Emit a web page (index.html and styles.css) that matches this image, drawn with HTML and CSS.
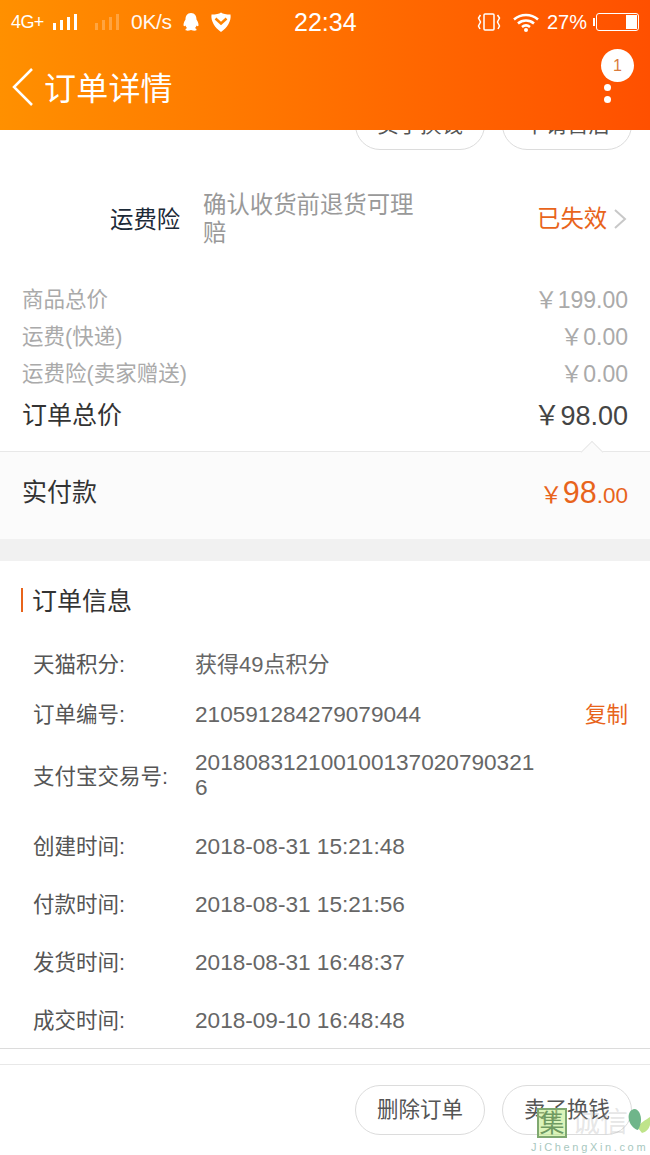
FILE: index.html
```html
<!DOCTYPE html>
<html lang="zh">
<head>
<meta charset="utf-8">
<title>订单详情</title>
<link rel="stylesheet" href="styles.css">
</head>
<body>
<div class="page">
  <header class="top">
    <div class="status">
      <div class="status-left">
        <span class="net">4G+</span>
        <svg class="bars" width="26" height="20" viewBox="0 0 26 20"><rect x="1" y="11" width="3" height="7"/><rect x="8" y="8" width="3" height="10"/><rect x="15" y="5" width="3" height="13"/><rect x="22" y="2" width="3" height="16"/></svg>
        <svg class="bars dim" width="26" height="20" viewBox="0 0 26 20"><rect x="1" y="11" width="3" height="7"/><rect x="8" y="8" width="3" height="10"/><rect x="15" y="5" width="3" height="13"/><rect x="22" y="2" width="3" height="16"/></svg>
        <span class="speed">0K/s</span>
        <svg class="qq" width="18" height="20" viewBox="0 0 18 20"><path d="M9 1C5 1 3.500 4 3.500 7.500C2.500 9 1.500 11 1.500 13C1.500 14.500 2.500 14.500 3.500 13.500C4 15 4.500 15.500 5 16C4 16.500 3.500 17 3.500 17.800C3.500 19 6.500 19 9 18C11.500 19 14.500 19 14.500 17.800C14.500 17 14 16.500 13 16C13.500 15.500 14 15 14.500 13.500C15.500 14.500 16.500 14.500 16.500 13C16.500 11 15.500 9 14.500 7.500C14.500 4 13 1 9 1Z" fill="#fff"/></svg>
        <svg class="shield" width="22" height="22" viewBox="0 0 22 22"><path d="M11 1.500C13 3 16 3.500 20.500 3.500C21.500 10 17 17 11 21C5 17 .5 10 1.500 3.500C6 3.500 9 3 11 1.500Z" fill="#fff"/><path d="M5.500 7.500L11 12.500L16.500 7.500" fill="none" stroke="#ff8400" stroke-width="2.500"/></svg>
      </div>
      <span class="clock">22:34</span>
      <div class="status-right">
        <svg class="vib" width="24" height="20" viewBox="0 0 24 20" fill="none" stroke="#fff" stroke-width="1.500"><rect x="7" y="2" width="10" height="16" rx="1"/><path d="M3.500 3L1.500 6L3.500 10L1.500 14L3 17M20.500 3L22.500 6L20.500 10L22.500 14L21 17"/></svg>
        <svg class="wifi" width="28" height="20" viewBox="0 0 28 20" fill="none" stroke="#fff" stroke-width="2.600"><path d="M2 7.500C9 1.500 19 1.500 26 7.500"/><path d="M6 11.500C10.500 7.500 17.500 7.500 22 11.500"/><path d="M10 15C12.500 13 15.500 13 18 15"/><circle cx="14" cy="18" r="2" fill="#fff" stroke="none"/></svg>
        <span class="pct">27%</span>
        <div class="battery"><span class="battery-fill"></span></div>
      </div>
    </div>
    <div class="nav">
      <svg class="back" width="24" height="40" viewBox="0 0 24 40" fill="none" stroke="#fff" stroke-width="2.500"><path d="M21 2L3 20L21 38"/></svg>
      <span class="nav-title">订单详情</span>
      <div class="more">
        <span class="badge">1</span>
        <span class="dot"></span>
        <span class="dot"></span>
      </div>
    </div>
  </header>

  <main class="content">
    <div class="actions actions-top">
      <span class="pill">卖了换钱</span>
      <span class="pill">申请售后</span>
    </div>

    <section class="insure">
      <span class="insure-name">运费险</span>
      <span class="insure-desc">确认收货前退货可理赔</span>
      <span class="insure-state">已失效</span>
      <svg class="chev" width="14" height="22" viewBox="0 0 14 22" fill="none" stroke="#c8c8c8" stroke-width="2"><path d="M2 2L12 11L2 20"/></svg>
    </section>

    <section class="prices">
      <div class="price-row"><span>商品总价</span><span class="amt">￥199.00</span></div>
      <div class="price-row"><span>运费(快递)</span><span class="amt">￥0.00</span></div>
      <div class="price-row"><span>运费险(卖家赠送)</span><span class="amt">￥0.00</span></div>
      <div class="price-row total"><span>订单总价</span><span class="amt">￥98.00</span></div>
    </section>

    <section class="paid">
      <span class="paid-caret"></span>
      <span class="paid-label">实付款</span>
      <span class="paid-amount"><span class="yen">￥</span><span class="big">98</span><span class="cents">.00</span></span>
    </section>

    <div class="gap"></div>

    <section class="info">
      <h2 class="info-title">订单信息</h2>
      <div class="info-row r-first"><span class="k">天猫积分:</span><span class="v">获得49点积分</span></div>
      <div class="info-row r-order"><span class="k">订单编号:</span><span class="v num">210591284279079044</span><span class="copy">复制</span></div>
      <div class="info-row r-alipay"><span class="k">支付宝交易号:</span><span class="v wrap">201808312100100137020790321<br>6</span></div>
      <div class="info-row r-time"><span class="k">创建时间:</span><span class="v num">2018-08-31 15:21:48</span></div>
      <div class="info-row r-time"><span class="k">付款时间:</span><span class="v num">2018-08-31 15:21:56</span></div>
      <div class="info-row r-time"><span class="k">发货时间:</span><span class="v num">2018-08-31 16:48:37</span></div>
      <div class="info-row r-time"><span class="k">成交时间:</span><span class="v num">2018-09-10 16:48:48</span></div>
    </section>

    <div class="rule-gap"></div>

    <div class="actions actions-bottom">
      <span class="pill">删除订单</span>
      <span class="pill">卖了换钱</span>
    </div>
  </main>

  <div class="watermark">
    <span class="wm-box">集</span>
    <span class="wm-cn">诚信</span>
    <svg class="wm-leaf" width="24" height="26" viewBox="0 0 24 26"><path d="M14 25C20 24 24 17 22 9C18 12 12 14 10 20Z" fill="#bfe48a"/><path d="M6 1C1 2 -1 9 2 15C4 19 8 22 10 22C13 17 14 11 12 6C11 3 9 1 6 1Z" fill="#6fb58a"/></svg>
    <span class="wm-en">JiChengXin.com</span>
  </div>
</div>
</body>
</html>
```

FILE: styles.css
```css
* { box-sizing: border-box; margin: 0; padding: 0; }
html, body { background: #fff; }
body { font-family: "Liberation Sans", "Noto Sans CJK SC", sans-serif; }
.page { position: relative; width: 650px; height: 1155px; overflow: hidden; background: #fff; }

.top { position: relative; z-index: 2; height: 130px; background: linear-gradient(90deg, #ff9000, #ff5000); color: #fff; }
.status { position: relative; height: 44px; padding: 0 11px; display: flex; align-items: center; justify-content: space-between; }
.status-left, .status-right { display: flex; align-items: center; }
.net { font-size: 18px; letter-spacing: -.6px; width: 41px; }
.bars { fill: #fff; margin-right: 16px; }
.bars.dim { opacity: .25; margin-right: 11px; }
.speed { font-size: 21px; width: 52px; margin-right: 0; opacity: .95; letter-spacing: -.3px; }
.qq { margin-right: 10px; margin-left: -1px; }
.clock { position: absolute; left: 294px; top: 8px; font-size: 25px; line-height: 28px; }
.vib { margin-right: 11px; }
.wifi { margin-right: 7px; }
.pct { font-size: 20px; margin-right: 9px; }
.battery { position: relative; width: 43px; height: 18px; border: 1px solid #fff; border-radius: 3px; }
.battery::before { content: ""; position: absolute; left: -4px; top: 4px; width: 2px; height: 8px; background: #fff; }
.battery-fill { position: absolute; right: 1px; top: 1px; bottom: 1px; width: 11px; background: #fff; }

.nav { position: relative; height: 86px; display: flex; align-items: center; padding: 0 0 0 11px; }
.back { margin-right: 9px; }
.nav-title { font-size: 32px; line-height: 40px; padding-top: 4px; letter-spacing: .2px; }
.more { position: absolute; left: 601px; top: 5px; width: 33px; display: flex; flex-direction: column; align-items: center; }
.badge { width: 33px; height: 33px; margin-bottom: 2px; border-radius: 50%; background: #fff; color: #d97a3c; font-size: 16px; line-height: 33px; text-align: center; }
.dot { width: 7px; height: 7px; border-radius: 50%; background: #fff; margin-bottom: 5px; transform: translateX(-10px); }

.content { margin-top: -30px; }
.actions { display: flex; justify-content: flex-end; gap: 17px; padding-right: 18px; }
.pill { width: 130px; height: 50px; border: 1px solid #dcdcdc; border-radius: 25px; font-size: 21.500px; line-height: 48px; text-align: center; color: #555; }

.insure { position: relative; height: 133px; display: flex; align-items: center; color: #999; }
.insure-name { position: absolute; left: 110px; top: 57px; font-size: 23.400px; line-height: 26px; color: #1c2a38; }
.insure-desc { position: absolute; left: 203px; top: 41px; width: 220px; font-size: 23.400px; line-height: 28px; color: #999; }
.insure-state { position: absolute; left: 537px; top: 55px; font-size: 23.400px; line-height: 28px; color: #e8641b; }
.chev { position: absolute; left: 613px; top: 58px; }

.prices { padding: 0 22px 15px; margin-top: -4px; }
.price-row { display: flex; justify-content: space-between; height: 37px; align-items: center; font-size: 21.500px; color: #aaa; }
.amt { font-size: 23px; }
.price-row.total { height: 46px; font-size: 25px; color: #333; }
.price-row.total .amt { font-size: 27px; color: #444; }

.paid { position: relative; height: 88px; display: flex; justify-content: space-between; align-items: center; padding: 0 22px 12px; background: #fbfbfb; border-top: 1px solid #e8e8e8; }
.paid-caret { position: absolute; left: 584px; top: -8px; width: 16px; height: 16px; background: #fbfbfb; border-left: 1px solid #e8e8e8; border-top: 1px solid #e8e8e8; transform: rotate(45deg); }
.paid-label { font-size: 25px; color: #333; }
.paid-amount { color: #e8641b; display: flex; align-items: baseline; padding-top: 6px; }
.yen { font-size: 23px; }
.big { font-size: 30.500px; }
.cents { font-size: 22.500px; }

.gap { height: 22px; background: #f1f1f1; }

.info { position: relative; height: 488px; padding-top: 27px; border-bottom: 1px solid #dcdcdc; }
.info-title { margin-left: 21px; padding-left: 9px; height: 24px; border-left: 2px solid #e8641b; font-size: 25px; font-weight: normal; line-height: 26px; color: #333; }
.info-row { position: relative; display: flex; align-items: center; padding-left: 33px; font-size: 21.500px; color: #555; }
.r-first { height: 50px; margin-top: 25px; }
.r-order { height: 50px; }
.r-alipay { height: 74px; margin-bottom: 4px; }
.r-time { height: 58px; }
.k { width: 162px; flex: none; }
.v { color: #666; font-size: 22px; }
.v.num, .v.wrap { font-size: 22.600px; }
.v.num { padding-top: 6px; }
.v.wrap { line-height: 25px; padding-top: 2px; }
.copy { position: absolute; left: 585px; color: #e8641b; font-size: 21.500px; }

.rule-gap { height: 16px; border-bottom: 1px solid #e8e8e8; }
.actions-bottom { padding-top: 20px; }

.watermark { position: absolute; left: 530px; top: 1105px; width: 120px; height: 50px; pointer-events: none; }
.wm-box { position: absolute; left: 7px; top: 3px; width: 30px; height: 30px; border: 2px solid #7fa870; background: rgba(190, 235, 130, .55); color: #6f9a62; font-size: 25px; line-height: 26px; text-align: center; }
.wm-cn { position: absolute; left: 42px; top: 2px; font-size: 28px; line-height: 32px; color: rgba(170, 170, 170, .3); }
.wm-leaf { position: absolute; left: 98px; top: 3px; }
.wm-en { position: absolute; left: 1px; top: 36px; font-size: 11px; letter-spacing: 2.650px; color: #a8c8c0; }
```
